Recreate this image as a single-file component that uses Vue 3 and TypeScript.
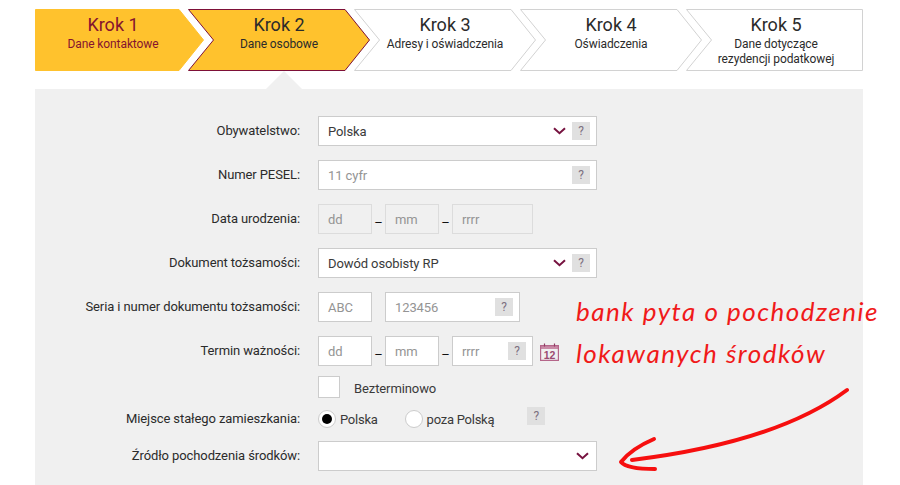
<script setup lang="ts">
interface Step {
  title: string
  lines: string[]
  width: number
  kind: 'done' | 'active' | 'todo'
  first?: boolean
  last?: boolean
}

const steps: Step[] = [
  { title: 'Krok 1', lines: ['Dane kontaktowe'], width: 169, kind: 'done', first: true },
  { title: 'Krok 2', lines: ['Dane osobowe'], width: 182, kind: 'active' },
  { title: 'Krok 3', lines: ['Adresy i oświadczenia'], width: 182, kind: 'todo' },
  { title: 'Krok 4', lines: ['Oświadczenia'], width: 182, kind: 'todo' },
  { title: 'Krok 5', lines: ['Dane dotyczące', 'rezydencji podatkowej'], width: 177, kind: 'todo', last: true }
]

const stepPoints = (s: Step) => {
  const w = s.width
  const right = s.last
    ? `${w - 0.5},0.5 ${w - 0.5},61.5`
    : `${w - 25},0.5 ${w - 0.5},31 ${w - 25},61.5`
  const notch = s.first ? '' : ' 25.5,31'
  return `0.5,0.5 ${right} 0.5,61.5${notch}`
}
</script>

<template>
  <div class="page">
    <div class="steps">
      <div
        v-for="s in steps"
        :key="s.title"
        class="step"
        :class="[s.kind, { first: s.first, last: s.last }]"
        :style="{ width: s.width + 'px' }"
      >
        <svg class="shape" :width="s.width" height="62">
          <polygon :points="stepPoints(s)" />
        </svg>
        <div class="step-title">{{ s.title }}</div>
        <div v-for="l in s.lines" :key="l" class="step-line">{{ l }}</div>
      </div>
    </div>

    <div class="panel">
      <div class="row">
        <label class="lbl">Obywatelstwo:</label>
        <div class="box wide">
          <span class="value">Polska</span>
          <svg class="chev" width="13" height="8" viewBox="0 0 13 8"><path d="M1 1.2l5.5 5 5.5-5" /></svg>
          <span class="help">?</span>
        </div>
      </div>

      <div class="row">
        <label class="lbl">Numer PESEL:</label>
        <div class="box wide">
          <span class="value ph">11 cyfr</span>
          <span class="help">?</span>
        </div>
      </div>

      <div class="row">
        <label class="lbl">Data urodzenia:</label>
        <div class="box small off"><span class="value ph">dd</span></div>
        <span class="dash">–</span>
        <div class="box small off"><span class="value ph">mm</span></div>
        <span class="dash">–</span>
        <div class="box year off"><span class="value ph">rrrr</span></div>
      </div>

      <div class="row">
        <label class="lbl">Dokument tożsamości:</label>
        <div class="box wide">
          <span class="value">Dowód osobisty RP</span>
          <svg class="chev" width="13" height="8" viewBox="0 0 13 8"><path d="M1 1.2l5.5 5 5.5-5" /></svg>
          <span class="help">?</span>
        </div>
      </div>

      <div class="row">
        <label class="lbl">Seria i numer dokumentu tożsamości:</label>
        <div class="box small"><span class="value ph">ABC</span></div>
        <div class="box number">
          <span class="value ph">123456</span>
          <span class="help">?</span>
        </div>
      </div>

      <div class="row tight">
        <label class="lbl">Termin ważności:</label>
        <div class="box small"><span class="value ph">dd</span></div>
        <span class="dash">–</span>
        <div class="box small"><span class="value ph">mm</span></div>
        <span class="dash">–</span>
        <div class="box year">
          <span class="value ph">rrrr</span>
          <span class="help">?</span>
        </div>
        <svg class="cal" width="19" height="18" viewBox="0 0 19 18">
          <path class="cal-band" d="M0 2h19v4H0z" />
          <path class="cal-line" d="M.6 2.6h17.8v14.8H.6z" />
          <path class="cal-ring" d="M4.5 .5v3M14.5 .5v3" />
          <text x="9.5" y="15.5" text-anchor="middle">12</text>
        </svg>
      </div>

      <div class="row check-row">
        <span class="lbl"></span>
        <span class="check"></span>
        <span class="check-text">Bezterminowo</span>
      </div>

      <div class="row radio-row">
        <label class="lbl">Miejsce stałego zamieszkania:</label>
        <span class="radio on"></span>
        <span class="radio-text">Polska</span>
        <span class="radio second"></span>
        <span class="radio-text">poza Polską</span>
        <span class="help alone">?</span>
      </div>

      <div class="row">
        <label class="lbl">Źródło pochodzenia środków:</label>
        <div class="box wide">
          <span class="value"></span>
          <svg class="chev end" width="13" height="8" viewBox="0 0 13 8"><path d="M1 1.2l5.5 5 5.5-5" /></svg>
        </div>
      </div>
    </div>

    <div class="note">
      <div>bank pyta o pochodzenie</div>
      <div>lokawanych środków</div>
    </div>
    <svg class="arrow" width="900" height="485" viewBox="0 0 900 485">
      <path d="M847 390C800 425 730 448 632 460" />
      <path d="M654 439C640 445 628 453 621 462C626 468 640 469 655 469" />
    </svg>
  </div>
</template>

<style>
html,
body {
  margin: 0;
  background: #fff;
}
</style>

<style scoped>
.page {
  position: relative;
  box-sizing: border-box;
  width: 900px;
  height: 485px;
  padding: 9px 37px 0 35px;
  overflow: hidden;
  font-family: Roboto, sans-serif;
  letter-spacing: -0.1px;
  color: #2b2b2b;
}

.steps {
  display: flex;
  height: 62px;
}

.step {
  position: relative;
  flex: none;
  box-sizing: border-box;
  height: 62px;
  margin-right: -16px;
  padding-top: 5px;
  text-align: center;
}

.step.first {
  padding-right: 13px;
}

.step.last {
  margin-right: 0;
  padding-left: 3px;
}

.shape {
  position: absolute;
  left: 0;
  top: 0;
}

.shape polygon {
  fill: #fff;
  stroke: #d2d2d2;
  stroke-width: 1;
}

.step.done .shape polygon {
  fill: #ffc22d;
  stroke: #ffc22d;
}

.step.active .shape polygon {
  fill: #ffc22d;
  stroke: #7d1038;
}

.step.done {
  color: #85142f;
}

.step-title {
  position: relative;
  font-size: 18px;
  line-height: 21px;
  letter-spacing: 0;
}

.step-line {
  position: relative;
  font-size: 12px;
  line-height: 15px;
}

.step-title + .step-line {
  margin-top: 2px;
}

.panel {
  position: relative;
  box-sizing: border-box;
  height: 396px;
  margin-top: 18px;
  padding-top: 27px;
  background: #f0f0f0;
  font-size: 13px;
}

.panel::before {
  content: '';
  position: absolute;
  left: 231px;
  top: -18px;
  border-left: 18px solid transparent;
  border-right: 18px solid transparent;
  border-bottom: 18px solid #f0f0f0;
}

.row {
  display: flex;
  align-items: center;
  height: 30px;
  margin-bottom: 14px;
}

.row.tight {
  margin-bottom: 10px;
}

.check-row {
  height: 22px;
  margin-bottom: 12px;
}

.radio-row {
  height: 18px;
  margin-bottom: 13px;
}

.lbl {
  flex: none;
  width: 265px;
  margin-right: 18px;
  padding-bottom: 2px;
  text-align: right;
}

.box {
  display: flex;
  flex: none;
  align-items: center;
  box-sizing: border-box;
  height: 30px;
  padding: 0 6px 0 9px;
  background: #fff;
  border: 1px solid #ccc;
}

.box.off {
  background: #f0f0f0;
  border-color: #dcdcdc;
}

.wide {
  width: 279px;
}

.small {
  width: 54px;
}

.year {
  width: 81px;
}

.number {
  width: 135px;
  margin-left: 13px;
}

.value {
  flex: 1;
  color: #3a3a3a;
}

.value.ph {
  color: #949494;
}

.chev {
  flex: none;
  margin-right: 6px;
}

.chev.end {
  margin-right: 1px;
}

.chev path {
  fill: none;
  stroke: #76123f;
  stroke-width: 2;
}

.help {
  flex: none;
  width: 18px;
  height: 18px;
  line-height: 18px;
  text-align: center;
  font-size: 12px;
  color: #7d7080;
  background: #e0e0e0;
}

.dash {
  flex: none;
  width: 13px;
  padding-top: 7px;
  text-align: center;
  color: #111;
}

.cal {
  flex: none;
  margin-left: 7px;
  margin-top: 1px;
}

.cal-band {
  fill: #c98aa6;
}

.cal-line {
  fill: none;
  stroke: #b5668a;
  stroke-width: 1.2;
}

.cal-ring {
  fill: none;
  stroke: #8f3d63;
  stroke-width: 1.2;
}

.cal text {
  font-family: 'Liberation Sans', sans-serif;
  font-size: 10.5px;
  font-weight: 700;
  letter-spacing: 0;
  fill: #9c4a70;
}

.check {
  flex: none;
  box-sizing: border-box;
  width: 22px;
  height: 22px;
  background: #fff;
  border: 1px solid #ccc;
}

.check-text {
  margin-left: 14px;
  padding-top: 2px;
  color: #3a3a3a;
}

.radio {
  flex: none;
  position: relative;
  box-sizing: border-box;
  width: 18px;
  height: 18px;
  background: #fff;
  border: 1px solid #ccc;
  border-radius: 50%;
}

.radio.on::after {
  content: '';
  position: absolute;
  left: 3px;
  top: 3px;
  width: 10px;
  height: 10px;
  background: #000;
  border-radius: 50%;
}

.radio.second {
  margin-left: 27px;
}

.radio-text {
  margin-left: 4px;
  letter-spacing: -0.25px;
  color: #3a3a3a;
}

.help.alone {
  margin-left: 33px;
  margin-top: -6px;
}

.note {
  position: absolute;
  left: 576px;
  top: 290px;
  font-family: Lato, cursive;
  font-style: italic;
  font-size: 26px;
  line-height: 42px;
  letter-spacing: 1.5px;
  white-space: nowrap;
  color: #f01a1a;
}

.arrow {
  position: absolute;
  left: 0;
  top: 0;
  pointer-events: none;
}

.arrow path {
  fill: none;
  stroke: #f60f0f;
  stroke-width: 4;
  stroke-linecap: round;
  stroke-linejoin: round;
}
</style>
